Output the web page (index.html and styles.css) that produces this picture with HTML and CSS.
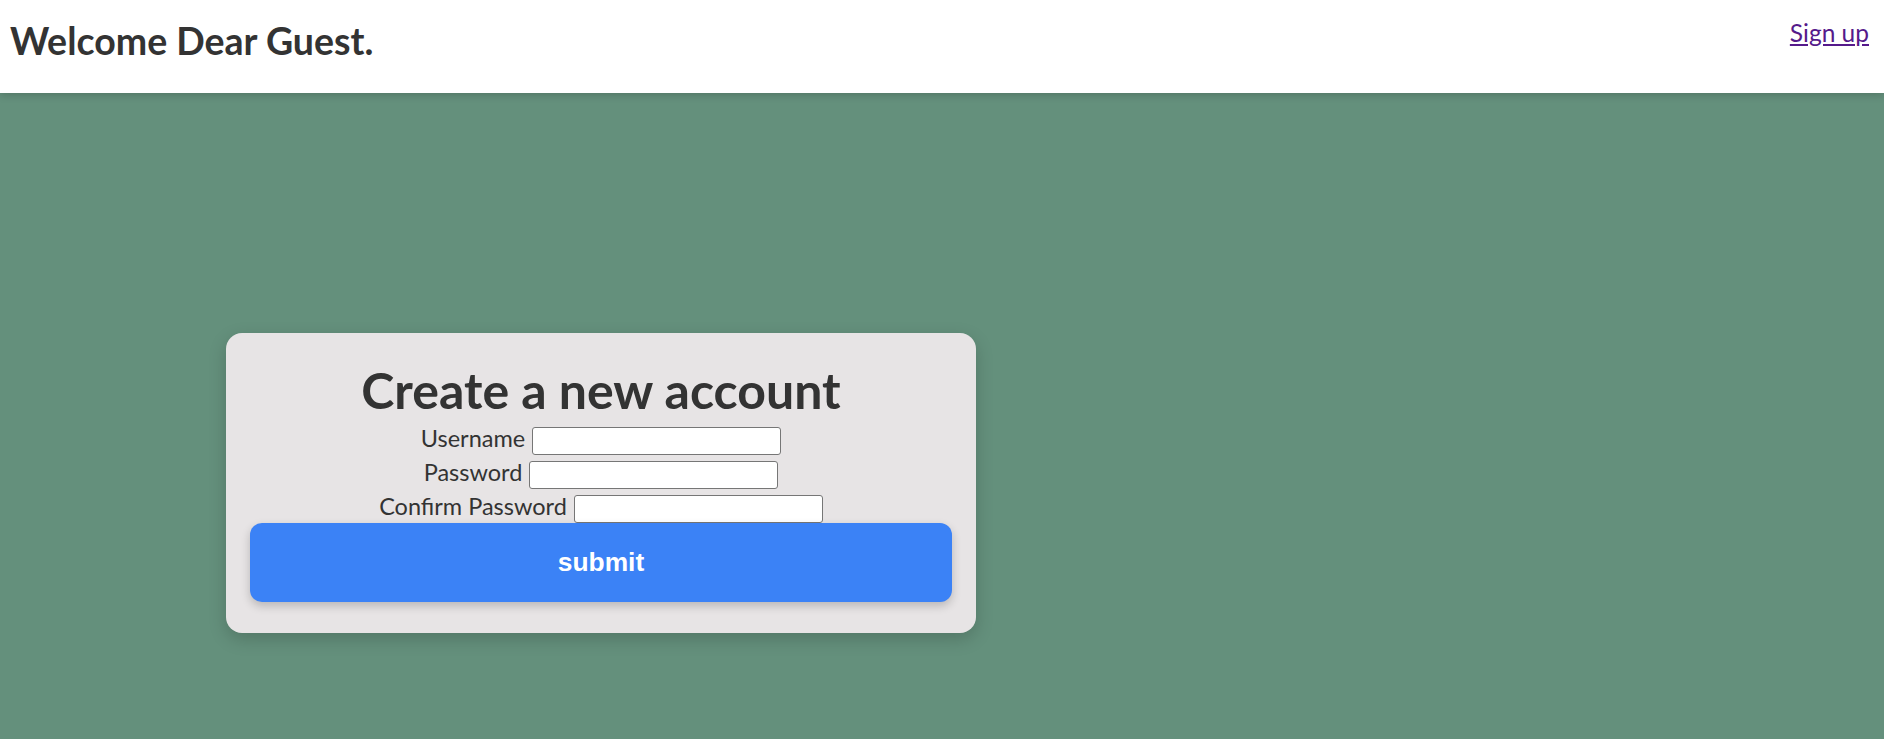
FILE: index.html
```html
<!DOCTYPE html>
<html lang="en">
<head>
<meta charset="utf-8">
<title>Sign up</title>
<link rel="stylesheet" href="styles.css">
</head>
<body>
<header class="topbar">
  <h1 class="welcome">Welcome Dear Guest.</h1>
  <a class="signup-link" href="#">Sign up</a>
</header>
<main class="main">
  <form class="card">
    <h2 class="card-title">Create a new account</h2>
    <div class="field"><label class="field-label" for="u">Username</label><input class="field-input" id="u" type="text"></div>
    <div class="field"><label class="field-label" for="p">Password</label><input class="field-input" id="p" type="password"></div>
    <div class="field"><label class="field-label" for="c">Confirm Password</label><input class="field-input" id="c" type="password"></div>
    <button class="submit" type="button">submit</button>
  </form>
</main>
</body>
</html>
```

FILE: styles.css
```css
html, body {
  margin: 0;
  padding: 0;
}
body {
  min-height: 100vh;
  background: #64907c;
  font-family: Lato, "Open Sans", sans-serif;
  color: #333333;
  display: flex;
  flex-direction: column;
}
.topbar {
  position: relative;
  z-index: 1;
  height: 93px;
  box-sizing: border-box;
  background: #ffffff;
  display: flex;
  justify-content: space-between;
  align-items: flex-start;
  padding: 18px 15px 0 10px;
  box-shadow: 0 2px 8px rgba(0, 0, 0, 0.18);
}
.welcome {
  margin: 0;
  font-size: 37.5px;
  line-height: 1.2;
  font-weight: 700;
  color: #333333;
}
.signup-link {
  margin-top: 0;
  font-size: 24.5px;
  line-height: 1.2;
  color: #551a8b;
  text-decoration: underline;
}
.main {
  flex: 1;
  padding: 240px 0 0 226px;
}
.card {
  width: 750px;
  box-sizing: border-box;
  background: #e7e4e5;
  border-radius: 16px;
  padding: 29px 24px 31px;
  display: flex;
  flex-direction: column;
  gap: 6px;
  box-shadow: 0 6px 18px rgba(0, 0, 0, 0.18);
}
.card-title {
  margin: 0 0 3px;
  font-size: 50px;
  line-height: 56px;
  font-weight: 700;
  text-align: center;
  color: #333333;
}
.field {
  height: 28px;
  display: flex;
  justify-content: center;
  align-items: center;
  gap: 7px;
}
.field-label {
  font-size: 23.5px;
  line-height: 1;
  margin-bottom: 5px;
  color: #333333;
}
.field-input {
  width: 249px;
  height: 28px;
  box-sizing: border-box;
  margin: 0;
  padding: 1px 2px;
  border: 1px solid #767676;
  border-radius: 3px;
  background: #ffffff;
  font-size: 19px;
}
.submit {
  margin-top: -6px;
  height: 79px;
  border: none;
  border-radius: 12px;
  background: #3b82f6;
  color: #ffffff;
  font-family: "Liberation Sans", Arial, sans-serif;
  font-weight: 700;
  font-size: 26.4px;
  box-shadow: 0 4px 10px rgba(0, 0, 0, 0.2);
  cursor: pointer;
}
```
